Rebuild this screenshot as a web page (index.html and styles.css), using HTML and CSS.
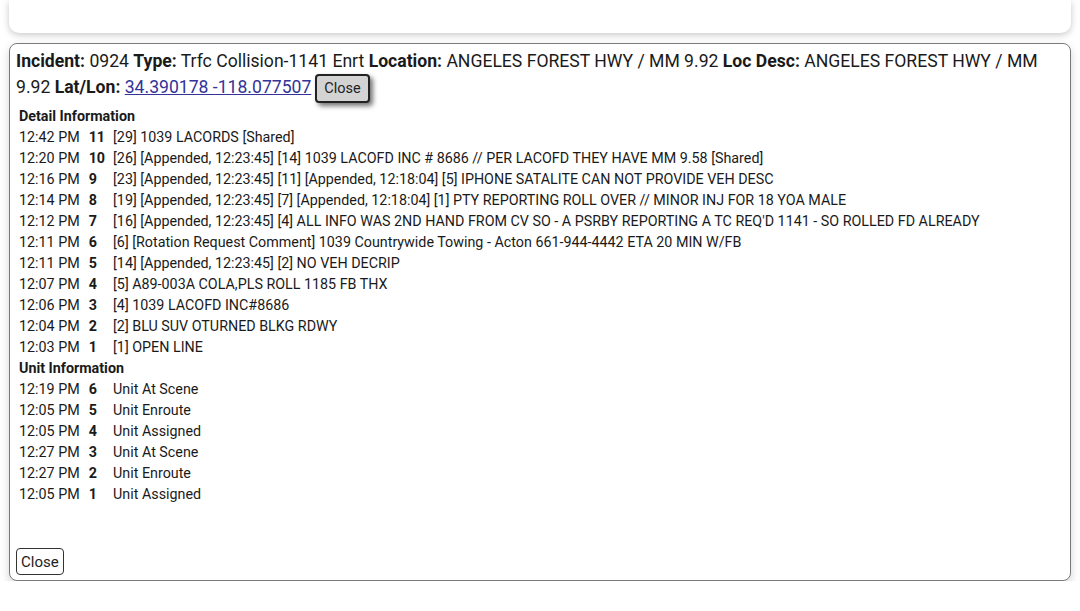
FILE: index.html
```html
<!DOCTYPE html>
<html>
<head>
<meta charset="utf-8">
<link rel="stylesheet" href="styles.css">
</head>
<body>
<div class="page">
  <div class="topcard"></div>
  <div class="panel">
    <div class="header">
      <b>Incident:</b> 0924 <b>Type:</b> Trfc Collision-1141 Enrt <b>Location:</b> ANGELES FOREST HWY / MM 9.92 <b>Loc Desc:</b> ANGELES FOREST HWY / MM 9.92 <b>Lat/Lon:</b> <a class="link" href="#">34.390178 -118.077507</a><button class="btn-top">Close</button>
    </div>
    <table class="info">
      <tr><th colspan="3">Detail Information</th></tr>
      <tr><td class="t">12:42 PM</td><td class="n">11</td><td>[29] 1039 LACORDS [Shared]</td></tr>
      <tr><td class="t">12:20 PM</td><td class="n">10</td><td>[26] [Appended, 12:23:45] [14] 1039 LACOFD INC # 8686 // PER LACOFD THEY HAVE MM 9.58 [Shared]</td></tr>
      <tr><td class="t">12:16 PM</td><td class="n">9</td><td>[23] [Appended, 12:23:45] [11] [Appended, 12:18:04] [5] IPHONE SATALITE CAN NOT PROVIDE VEH DESC</td></tr>
      <tr><td class="t">12:14 PM</td><td class="n">8</td><td>[19] [Appended, 12:23:45] [7] [Appended, 12:18:04] [1] PTY REPORTING ROLL OVER // MINOR INJ FOR 18 YOA MALE</td></tr>
      <tr><td class="t">12:12 PM</td><td class="n">7</td><td>[16] [Appended, 12:23:45] [4] ALL INFO WAS 2ND HAND FROM CV SO - A PSRBY REPORTING A TC REQ'D 1141 - SO ROLLED FD ALREADY</td></tr>
      <tr><td class="t">12:11 PM</td><td class="n">6</td><td>[6] [Rotation Request Comment] 1039 Countrywide Towing - Acton 661-944-4442 ETA 20 MIN W/FB</td></tr>
      <tr><td class="t">12:11 PM</td><td class="n">5</td><td>[14] [Appended, 12:23:45] [2] NO VEH DECRIP</td></tr>
      <tr><td class="t">12:07 PM</td><td class="n">4</td><td>[5] A89-003A COLA,PLS ROLL 1185 FB THX</td></tr>
      <tr><td class="t">12:06 PM</td><td class="n">3</td><td>[4] 1039 LACOFD INC#8686</td></tr>
      <tr><td class="t">12:04 PM</td><td class="n">2</td><td>[2] BLU SUV OTURNED BLKG RDWY</td></tr>
      <tr><td class="t">12:03 PM</td><td class="n">1</td><td>[1] OPEN LINE</td></tr>
      <tr><th colspan="3">Unit Information</th></tr>
      <tr><td class="t">12:19 PM</td><td class="n">6</td><td>Unit At Scene</td></tr>
      <tr><td class="t">12:05 PM</td><td class="n">5</td><td>Unit Enroute</td></tr>
      <tr><td class="t">12:05 PM</td><td class="n">4</td><td>Unit Assigned</td></tr>
      <tr><td class="t">12:27 PM</td><td class="n">3</td><td>Unit At Scene</td></tr>
      <tr><td class="t">12:27 PM</td><td class="n">2</td><td>Unit Enroute</td></tr>
      <tr><td class="t">12:05 PM</td><td class="n">1</td><td>Unit Assigned</td></tr>
    </table>
    <div class="footer"><button class="btn-bottom">Close</button></div>
  </div>
</div>
</body>
</html>
```

FILE: styles.css
```css
html, body {
  margin: 0;
  padding: 0;
  background: #ffffff;
}
body {
  font-family: Roboto, "Liberation Sans", Arial, sans-serif;
  color: #1a1a1a;
}
.page {
  padding: 0 9px;
}
.topcard {
  height: 33px;
  background: #fff;
  border-radius: 0 0 10px 10px;
  box-shadow: 0 2px 7px rgba(0, 0, 0, 0.22);
}
.panel {
  margin-top: 10px;
  border: 1px solid #7a7a7a;
  border-radius: 8px;
  padding: 4px 6px 5px;
  background: #fff;
  box-shadow: 0 4px 10px rgba(0, 0, 0, 0.18);
}
.header {
  font-size: 17.6px;
  line-height: 26px;
}
.header b {
  font-weight: 700;
}
.link {
  color: #333399;
  text-decoration: underline;
}
.btn-top {
  font-family: Roboto, "Liberation Sans", Arial, sans-serif;
  font-size: 14.5px;
  color: #222;
  background: #d3d3d3;
  border: 2px solid #222;
  border-radius: 4px;
  height: 29px;
  padding: 0 7px;
  margin-left: 4px;
  vertical-align: middle;
  box-shadow: 3px 3px 5px rgba(0, 0, 0, 0.55);
}
.info {
  margin-top: 2px;
  font-size: 14.3px;
  line-height: 17px;
  border-collapse: separate;
  border-spacing: 2px;
}
.info th {
  text-align: left;
  font-weight: 700;
  padding: 1px;
}
.info td {
  padding: 1px 4px 1px 1px;
  white-space: nowrap;
}
.info td.t {
  padding-right: 6px;
}
.info td.n {
  font-weight: 700;
  padding-right: 5px;
}
.footer {
  margin-top: 42px;
}
.btn-bottom {
  font-family: Roboto, "Liberation Sans", Arial, sans-serif;
  font-size: 15px;
  color: #222;
  background: #fff;
  border: 1px solid #333;
  border-radius: 4px;
  height: 27px;
  padding: 0 4px;
  display: block;
}
```
